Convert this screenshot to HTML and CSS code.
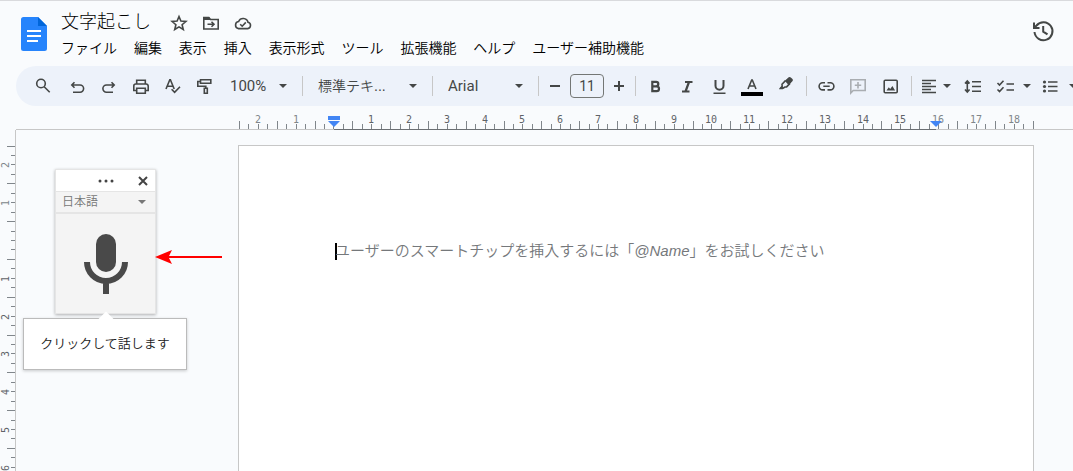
FILE: index.html
```html
<!DOCTYPE html>
<html lang="ja">
<head>
<meta charset="utf-8">
<meta name="viewport" content="width=device-width, initial-scale=1">
<title>文字起こし</title>
<link rel="stylesheet" href="styles.css">
</head>
<body>
<div class="app">
  <header class="header">
    <svg class="logo" viewBox="0 0 26 34" aria-hidden="true">
      <path fill="#2684fc" d="M2.500 0H17l9 9v22.500a2.500 2.500 0 0 1-2.500 2.500h-21A2.500 2.500 0 0 1 0 31.500v-29A2.500 2.500 0 0 1 2.500 0z"/>
      <path fill="#0066da" d="M17 0l9 9h-9z"/>
      <path fill="#fff" d="M6 13h14v2H6zM6 18h14v2H6zM6 23h11v2H6z"/>
    </svg>
    <div class="heading">
      <div class="title-row">
        <h1 class="title">文字起こし</h1>
        <div class="title-actions">
          <button class="title-btn" type="button" aria-label="スターを付ける"><svg class="icon" viewBox="0 0 20 20"><path d="M10 3.500l1.900 4.600 5 .4-3.800 3.200 1.200 4.800-4.300-2.600-4.300 2.600 1.200-4.800-3.800-3.200 5-.4z"/></svg></button>
          <button class="title-btn" type="button" aria-label="移動"><svg class="icon" viewBox="0 0 20 20"><path d="M2.800 4.500h5l1.700 2h7.700v9.500H2.800zM6.500 11.300h6M10.500 8.800l2.500 2.500-2.500 2.500"/><path class="solid" d="M3 4h5l2 3H3z"/></svg></button>
          <button class="title-btn" type="button" aria-label="保存状況"><svg class="icon" viewBox="0 0 20 20"><path d="M5.500 15.600h9.200a3.200 3.200 0 0 0 .3-6.300A5 5 0 0 0 5.600 8.500a3.600 3.600 0 0 0-.1 7.100zM7.200 11.200l2 2 3.600-3.800"/></svg></button>
        </div>
      </div>
      <nav class="menubar">
        <button class="menu" type="button">ファイル</button>
        <button class="menu" type="button">編集</button>
        <button class="menu" type="button">表示</button>
        <button class="menu" type="button">挿入</button>
        <button class="menu" type="button">表示形式</button>
        <button class="menu" type="button">ツール</button>
        <button class="menu" type="button">拡張機能</button>
        <button class="menu" type="button">ヘルプ</button>
        <button class="menu" type="button">ユーザー補助機能</button>
      </nav>
    </div>
    <button class="history" type="button" aria-label="変更履歴"><svg viewBox="0 0 24 24"><path d="M3.500 13A9 9 0 1 0 5.500 6.500L3.300 8.700M3 3.500V9h5.500M12.200 7v5.600l4.300 2.800"/></svg></button>
  </header>

  <div class="toolbar" role="toolbar" aria-label="ツールバー">
    <div class="group">
      <button class="tool tool-search" type="button" aria-label="検索"><svg class="icon" viewBox="0 0 20 20"><circle cx="8" cy="7.500" r="4.300"/><path d="M11.200 10.700l5.500 5.500"/></svg></button>
      <button class="tool" type="button" aria-label="元に戻す"><svg class="icon" viewBox="0 0 20 20"><path d="M7.500 6.300L4.800 9l2.700 2.700M5 9h8a3.600 3.600 0 0 1 0 7.200H6"/></svg></button>
      <button class="tool" type="button" aria-label="やり直す"><svg class="icon" viewBox="0 0 20 20"><path d="M12.500 6.300L15.200 9l-2.700 2.700M15 9H7.500a3.600 3.600 0 0 0 0 7.200h6.500"/></svg></button>
      <button class="tool" type="button" aria-label="印刷"><svg class="icon" viewBox="0 0 20 20"><path d="M5.700 7.500V4.300h8.600v3.200M5.700 14.500H2.800V10a2 2 0 0 1 2-2h10.400a2 2 0 0 1 2 2v4.500h-2.900M5.700 12.300h8.600v4.900H5.700z"/></svg></button>
      <button class="tool" type="button" aria-label="スペルチェック"><svg class="icon" viewBox="0 0 20 20"><path d="M3 13L6.800 3.800h.6l3.800 9.200M4.200 10.200h5.600M8.600 13.300l3 3 5.400-5.600"/></svg></button>
      <button class="tool" type="button" aria-label="書式を貼り付け"><svg class="icon" viewBox="0 0 20 20"><path d="M5.500 3.800h10.300v3.400H5.500zM5.500 5.500H2.800v4.800h8v2M9.300 12.300h3v5h-3z"/></svg></button>
      <span class="picker picker-zoom"><select aria-label="ズーム"><option>100%</option></select></span>
    </div>
    <span class="rule"></span>
    <span class="picker picker-style"><select aria-label="スタイル"><option>標準テキ...</option></select></span>
    <span class="rule"></span>
    <span class="picker picker-font"><select aria-label="フォント"><option>Arial</option></select></span>
    <span class="rule"></span>
    <div class="group group-size">
      <button class="step" type="button" aria-label="縮小"><svg viewBox="0 0 16 16"><path d="M3 8h10"/></svg></button>
      <input class="size" type="text" value="11" aria-label="フォントサイズ">
      <button class="step" type="button" aria-label="拡大"><svg viewBox="0 0 16 16"><path d="M3 8h10M8 3v10"/></svg></button>
    </div>
    <span class="rule"></span>
    <div class="group group-format">
      <button class="tool" type="button" aria-label="太字"><svg class="icon bold" viewBox="0 0 20 20"><path d="M6.300 5.900h3.800a2.200 2.200 0 0 1 0 4.400H6.300zM6.300 10.300h4.300a2.400 2.400 0 0 1 0 4.800H6.300z"/></svg></button>
      <button class="tool" type="button" aria-label="斜体"><svg class="icon bold" viewBox="0 0 20 20"><path d="M7 6h7.500M4 15.500h7.500M11 6l-3.500 9.500"/></svg></button>
      <button class="tool" type="button" aria-label="下線"><svg class="icon" viewBox="0 0 20 20"><path stroke-width="2" d="M5.500 4v5.700a4 4 0 0 0 8 0V4"/><path d="M3.500 17.200h12"/></svg></button>
      <button class="tool tool-color" type="button" aria-label="文字の色"><svg viewBox="0 0 24 24"><path d="M7 15L10.700 6h.6L15 15M8.300 12h5.400"/><path class="swatch" d="M0 18h22v4H0z"/></svg></button>
      <button class="tool" type="button" aria-label="ハイライト"><svg class="icon" viewBox="0 0 20 20"><path d="M9.500 4.600L6 8.300l.2 1.900-1.500 1.700 2.800.1 1.400-1 1.700-.1L14 7.400"/><path class="solid" d="M8.800 4.800l3.900-3.500q1-.8 2.100.1l1.700 1.700q.8 1 .1 2L12.700 9.200zM3 13.200l2.600-3 2.200 2.100-1 .9z"/></svg></button>
    </div>
    <span class="rule"></span>
    <div class="group group-format">
      <button class="tool" type="button" aria-label="リンクを挿入"><svg class="icon" viewBox="0 0 20 20"><path d="M8 6.700H5.700a3.600 3.600 0 0 0 0 7.200H8M10.500 6.700h2.800a3.600 3.600 0 0 1 0 7.200h-2.800M6.300 10.300h6.400"/></svg></button>
      <button class="tool" type="button" aria-label="コメントを追加" disabled><svg class="icon" viewBox="0 0 20 20"><path d="M1.800 17V3.800h14.400v10.700H4.200zM9 6v6.400M5.800 9.200h6.400"/></svg></button>
      <button class="tool" type="button" aria-label="画像を挿入"><svg class="icon" viewBox="0 0 20 20"><rect x="3.200" y="4.200" width="13" height="12.600" rx="1"/><path class="solid" d="M5.500 14.500l2.300-3.200 1.400 1.700 2.200-3 2.700 4.500z"/></svg></button>
    </div>
    <span class="rule"></span>
    <div class="group group-list">
      <button class="tool tool-menu tool-align" type="button" aria-label="配置"><svg class="icon" viewBox="0 0 20 20"><path d="M2 4.500h14M2 7.500h9M2 10.500h14M2 13.500h9M2 16.500h14"/></svg></button>
      <button class="tool" type="button" aria-label="行間隔"><svg class="icon" viewBox="0 0 20 20"><path d="M4.300 5v11M2 7.500l2.300-2.600 2.300 2.600M2 13.500l2.300 2.600 2.300-2.600M9 5.700h9M9 10.500h9M9 15.300h9"/></svg></button>
      <button class="tool tool-menu" type="button" aria-label="チェックリスト"><svg class="icon" viewBox="0 0 20 20"><path d="M2.500 7l2 2 4-4.200M2.500 13.500l2 2 4-4.200M11.500 8h7.500M11.500 14h7.500"/></svg></button>
      <button class="tool tool-menu" type="button" aria-label="箇条書き"><svg class="icon" viewBox="0 0 20 20"><path d="M7 6h9.500M7 10.500h9.500M7 15h9.500"/><g class="solid"><circle cx="3.500" cy="6" r="1.600"/><circle cx="3.500" cy="10.500" r="1.600"/><circle cx="3.500" cy="15" r="1.600"/></g></svg></button>
    </div>
  </div>

  <main class="workspace">
    <div class="ruler-x">
      <svg id="ruler-x" class="ruler-x-scale" aria-hidden="true"></svg>
    </div>
    <div class="ruler-y">
      <svg id="ruler-y" class="ruler-y-scale" aria-hidden="true"></svg>
    </div>
    <div class="canvas">
      <article class="page">
        <p class="line"><span class="caret"></span>ユーザーのスマートチップを挿入するには「<i>@Name</i>」をお試しください</p>
      </article>

      <section class="voice" aria-label="音声入力">
        <div class="voice-head">
          <svg class="grip" viewBox="0 0 16 4" aria-hidden="true"><circle cx="2" cy="2" r="1.500"/><circle cx="8" cy="2" r="1.500"/><circle cx="14" cy="2" r="1.500"/></svg>
          <button class="close" type="button" aria-label="閉じる"><svg viewBox="0 0 10 10"><path d="M1 1l8 8M9 1L1 9"/></svg></button>
        </div>
        <span class="picker picker-lang"><select aria-label="言語"><option>日本語</option></select></span>
        <button class="mic" type="button" aria-label="クリックして話します">
          <svg viewBox="0 0 44 60"><rect x="12" y="0" width="20" height="38" rx="10"/><path d="M3 28a19 19 0 0 0 38 0M22 47v13"/></svg>
        </button>
        <div class="tip" role="tooltip">クリックして話します<svg class="tip-nose" viewBox="0 0 16 9" aria-hidden="true"><path d="M0 8.500L8 .5l8 8z"/></svg></div>
        <svg class="pointer" viewBox="0 0 68 14" aria-hidden="true"><path d="M0 7L17 0 13.500 7 17 14z"/><path d="M12 6h55v2H12z"/></svg>
      </section>
    </div>
  </main>
</div>
<script src="script.js"></script>
</body>
</html>
```
FILE: styles.css
```css
* {
  box-sizing: border-box;
}

body {
  margin: 0;
  background: #f9fbfd;
  color: #000;
  font-family: "Liberation Sans", "Noto Sans CJK JP", sans-serif;
  font-size: 14px;
  font-weight: 350;
}

button,
input,
select {
  margin: 0;
  padding: 0;
  border: 0;
  background: none;
  color: inherit;
  font: inherit;
}

svg {
  display: block;
}

.app {
  display: flex;
  flex-direction: column;
  height: 100vh;
  overflow: hidden;
  border-top: 1px solid #d9dadd;
}

/* Header */

.header {
  display: flex;
  align-items: flex-start;
  padding: 8px 18px 8px 21px;
}

.logo {
  width: 26px;
  height: 34px;
  margin-top: 8px;
}

.heading {
  flex: 1;
  padding-left: 14px;
}

.title-row {
  display: flex;
  align-items: center;
  gap: 18px;
  height: 25px;
}

.title {
  margin: 0;
  font-size: 18px;
  font-weight: 300;
  line-height: 24px;
}

.title-actions {
  display: flex;
  gap: 12px;
  padding-top: 3px;
}

.icon {
  width: 20px;
  height: 20px;
  fill: none;
  stroke: #444746;
  stroke-width: 1.6;
}

.icon .solid {
  fill: #444746;
  stroke: none;
}

.icon.bold {
  stroke-width: 2.2;
}

.menubar {
  display: flex;
  justify-content: space-between;
  max-width: 583px;
  padding-top: 4px;
}

.menu {
  line-height: 20px;
  white-space: nowrap;
}

.history {
  margin-top: 10px;
}

.history svg {
  width: 24px;
  height: 24px;
  fill: none;
  stroke: #444746;
  stroke-width: 2;
}

/* Toolbar */

.toolbar {
  display: flex;
  flex: none;
  align-items: center;
  gap: 8px;
  height: 40px;
  margin-left: 16px;
  padding-left: 11px;
  overflow: hidden;
  border-radius: 20px 0 0 20px;
  background: #edf2fa;
  color: #444746;
}

.group {
  display: flex;
  flex: none;
  align-items: center;
  gap: 4px;
}

.group-size {
  gap: 7px;
}

.group-format {
  gap: 8px;
}

.group-list {
  gap: 10px;
}

.rule {
  flex: none;
  width: 1px;
  height: 20px;
  background: #c7c7c7;
}

.tool {
  display: flex;
  align-items: center;
  justify-content: center;
  width: 28px;
  height: 28px;
}

.tool:disabled {
  opacity: 0.4;
}

.group-format .tool,
.group-list .tool {
  width: 24px;
}

.tool.tool-search {
  width: 32px;
}

.group-format .tool-color {
  width: 26px;
}

.tool-color svg {
  width: 24px;
  height: 24px;
  fill: none;
  stroke: #444746;
  stroke-width: 1.6;
}

.tool-color .swatch {
  fill: #000;
  stroke: none;
}

.group-list .tool-menu {
  gap: 8px;
  width: auto;
}

.group-list .tool-align {
  gap: 3px;
}

.tool-menu::after,
.picker::after {
  content: "";
  border: 4px solid transparent;
  border-top-color: #444746;
  border-bottom-width: 0;
}

.picker {
  display: grid;
  flex: none;
  align-items: center;
  height: 28px;
}

.picker select {
  grid-area: 1 / 1;
  width: 100%;
  height: 100%;
  padding: 0 24px 0 7px;
  appearance: none;
}

.picker::after {
  grid-area: 1 / 1;
  justify-self: end;
  margin-right: 7px;
  pointer-events: none;
}

.picker-zoom {
  width: 71px;
  font-family: Roboto, sans-serif;
  font-size: 15px;
  font-weight: 400;
}

.picker-style {
  width: 113px;
}

.picker-font {
  width: 89px;
  font-family: Roboto, sans-serif;
  font-size: 15px;
  font-weight: 400;
}

.step svg {
  width: 16px;
  height: 16px;
  fill: none;
  stroke: #444746;
  stroke-width: 2;
}

.size {
  width: 34px;
  height: 24px;
  border: 1px solid #747775;
  border-radius: 4px;
  font-family: Roboto, sans-serif;
  font-weight: 400;
  text-align: center;
}

/* Rulers and document */

.workspace {
  display: grid;
  flex: 1;
  grid-template-rows: 24px 1fr;
  grid-template-columns: 16px 1fr;
  min-height: 0;
}

.ruler-x {
  grid-column: 2;
  border-bottom: 1px solid #c7c7c7;
}

.ruler-x-scale {
  width: 796px;
  height: 24px;
  margin-left: 222px;
  overflow: visible;
}

.ruler-y {
  overflow: hidden;
  border-right: 1px solid #c7c7c7;
}

.ruler-y-scale {
  width: 16px;
  height: 1000px;
}

.tick {
  fill: #80868b;
}

.bar {
  fill: #6b6f73;
}

.number {
  fill: #5f6368;
  font-family: "DejaVu Sans Mono", monospace;
  font-size: 10px;
  font-weight: 400;
  text-anchor: middle;
}

.number-margin {
  fill: #80868b;
}

.marker {
  fill: #4285f4;
}

.canvas {
  position: relative;
  padding: 15px 0 0 222px;
  overflow: hidden;
}

.page {
  width: 796px;
  height: 1123px;
  padding: 95px 96px;
  border: 1px solid #c7c7c7;
  background: #fff;
}

.line {
  display: flex;
  align-items: center;
  margin: 0;
  color: #75787b;
  font-size: 15px;
  line-height: 20px;
  white-space: nowrap;
}

.caret {
  width: 2px;
  height: 17px;
  margin-right: -2px;
  background: #000;
}

/* Voice typing window, floating over the canvas */

.voice {
  position: absolute;
  top: 39px;
  left: 39px;
  width: 101px;
  border: 1px solid #e5e5e5;
  background: #f4f4f4;
  box-shadow: 0 1px 3px rgba(0, 0, 0, 0.3);
}

.voice-head {
  display: grid;
  grid-template-columns: 1fr auto 1fr;
  align-items: center;
  height: 21px;
  padding: 0 7px;
  background: #fff;
}

.grip {
  grid-column: 2;
  width: 16px;
  height: 4px;
  fill: #444;
}

.close {
  justify-self: end;
}

.close svg {
  width: 10px;
  height: 10px;
  stroke: #444;
  stroke-width: 2;
}

.picker-lang {
  height: 23px;
  border-top: 1px solid #e5e5e5;
  border-bottom: 2px solid #e5e5e5;
  color: #777;
  font-size: 12px;
}

.picker-lang select {
  padding: 0 0 0 6px;
}

.picker-lang::after {
  margin-right: 9px;
  border-top-color: #777;
}

.mic {
  display: grid;
  width: 100%;
  height: 99px;
  place-items: center;
}

.mic svg {
  width: 44px;
  height: 60px;
}

.mic rect {
  fill: #494949;
}

.mic path {
  fill: none;
  stroke: #494949;
  stroke-width: 6;
}

.tip {
  position: absolute;
  top: 148px;
  left: -33px;
  width: 164px;
  padding: 15px 0;
  border: 1px solid #bbb;
  background: #fff;
  box-shadow: 0 1px 3px rgba(0, 0, 0, 0.2);
  color: #222;
  font-size: 13px;
  line-height: 20px;
  text-align: center;
}

.tip-nose {
  position: absolute;
  bottom: 100%;
  left: 74px;
  width: 16px;
  height: 9px;
  margin-bottom: -1px;
  fill: #fff;
}

.pointer {
  position: absolute;
  top: 80px;
  left: 99px;
  width: 68px;
  height: 14px;
  fill: #f00;
}
```
FILE: script.js
```js
const NS = "http://www.w3.org/2000/svg";
const CM = 37.8;

function add(parent, name, attrs, text) {
  const node = document.createElementNS(NS, name);
  for (const key in attrs) node.setAttribute(key, attrs[key]);
  if (text !== undefined) node.textContent = text;
  parent.appendChild(node);
}

// Quarter-centimetre ticks; the half-centimetre ones are long.
function eachTick(zero, from, to, draw) {
  for (let q = from * 4; q <= to * 4; q++) {
    const long = Math.abs(q % 4) === 2;
    draw(Math.round(zero + q * CM / 4), long, q % 4 === 0 ? q / 4 : null);
  }
}

const horizontal = document.getElementById("ruler-x");
add(horizontal, "rect", { class: "bar", x: 96, y: 23, width: 602, height: 1 });
eachTick(95.4, -2.5, 18.5, (x, long, n) => {
  const h = long ? 8 : 5;
  add(horizontal, "rect", { class: "tick", x, y: 23 - h, width: 1, height: h });
  if (n) {
    const side = n < 0 || n >= 16 ? " number-margin" : "";
    add(horizontal, "text", { class: "number" + side, x, y: 17 }, Math.abs(n));
  }
});
add(horizontal, "path", { class: "marker", d: "M90 10h12v4H90zM90 15h12l-6 6z" });
add(horizontal, "path", { class: "marker", d: "M692 15h12l-6 6z" });

// The vertical scale runs only as far as the visible part of the page.
const vertical = document.getElementById("ruler-y");
const visible = (vertical.parentNode.clientHeight - 110) / CM;
const last = Math.floor(visible * 4) / 4;
add(vertical, "rect", { class: "bar", x: 15, y: 111, width: 1, height: 889 });
eachTick(110, -2.5, last, (y, long, n) => {
  const w = long ? 8 : 4;
  add(vertical, "rect", { class: "tick", x: 15 - w, y, width: w, height: 1 });
  if (n) {
    const side = n < 0 ? " number-margin" : "";
    add(vertical, "text", { class: "number" + side, transform: `translate(9 ${y + 1}) rotate(-90)` }, Math.abs(n));
  }
});
```
